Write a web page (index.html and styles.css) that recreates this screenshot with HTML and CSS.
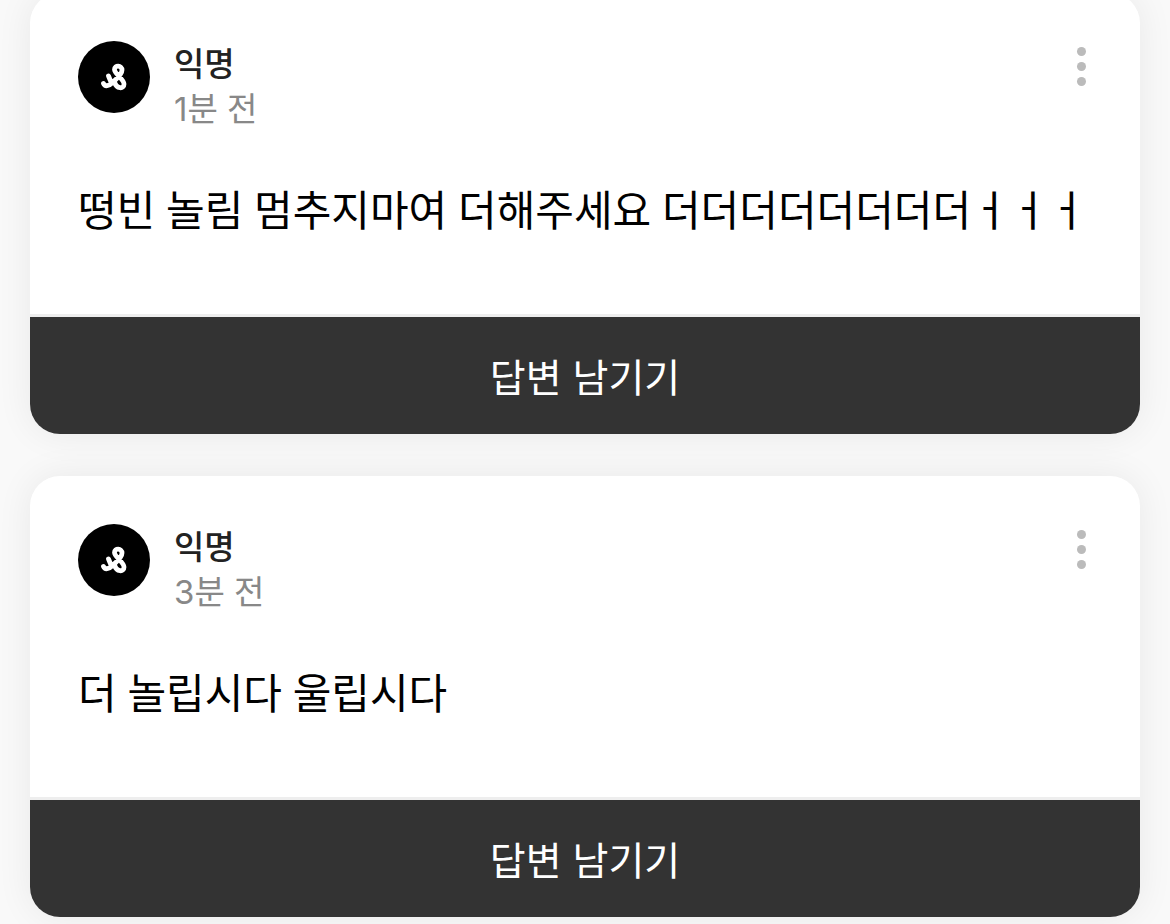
FILE: index.html
```html
<!DOCTYPE html>
<html lang="ko">
<head>
<meta charset="utf-8">
<meta name="viewport" content="width=device-width, initial-scale=1">
<title>익명 질문</title>
<link rel="stylesheet" href="styles.css">
</head>
<body>
<svg class="symbols" aria-hidden="true">
  <symbol id="ampersand" viewBox="0 0 72 72">
    <path d="M30.500 35 L33 41 M25.500 42.500 C27 46 31 45 34 42 C38 38 44 34 44 29 C44 24 36.500 24 36.500 28.500 C36.500 33 46 38 46 43 C46 48.500 38.500 48 36.500 41" fill="none" stroke="#fff" stroke-width="4.800" stroke-linecap="round" stroke-linejoin="round"/>
  </symbol>
</svg>
<main class="feed">
  <article class="card">
    <div class="content">
      <header class="header">
        <svg class="avatar" aria-hidden="true"><use href="#ampersand"/></svg>
        <div class="author">
          <span class="name">익명</span>
          <time class="time">1분 전</time>
        </div>
        <button class="more" type="button" aria-label="더보기"><span class="dot"></span><span class="dot"></span><span class="dot"></span></button>
      </header>
      <p class="message">떵빈 놀림 멈추지마여 더해주세요 더더더더더더더더ㅓㅓㅓ</p>
    </div>
    <button class="reply" type="button">답변 남기기</button>
  </article>
  <article class="card">
    <div class="content">
      <header class="header">
        <svg class="avatar" aria-hidden="true"><use href="#ampersand"/></svg>
        <div class="author">
          <span class="name">익명</span>
          <time class="time">3분 전</time>
        </div>
        <button class="more" type="button" aria-label="더보기"><span class="dot"></span><span class="dot"></span><span class="dot"></span></button>
      </header>
      <p class="message">더 놀립시다 울립시다</p>
    </div>
    <button class="reply" type="button">답변 남기기</button>
  </article>
</main>
</body>
</html>
```
FILE: styles.css
```css
* { box-sizing: border-box; }
body {
  margin: 0;
  background: #f9f9f9;
  color: #000;
  font-family: Inter, "Noto Sans CJK KR", sans-serif;
}
button {
  border: 0;
  font: inherit;
  cursor: pointer;
}
.symbols { display: none; }
.feed {
  display: flex;
  flex-direction: column;
  gap: 42px;
  margin-top: -7px;
  padding: 0 30px 7px;
}
.card {
  overflow: hidden;
  border-radius: 30px;
  background: #fff;
  box-shadow: 0 0 36px rgba(0, 0, 0, 0.07);
}
.content {
  padding: 48px 48px 74px;
  border-bottom: 3px solid #eee;
}
.header {
  display: flex;
  align-items: flex-start;
  gap: 24px;
}
.avatar {
  flex: none;
  width: 72px;
  height: 72px;
  border-radius: 50%;
  background: #000;
}
.author {
  display: flex;
  flex: 1;
  flex-direction: column;
  padding-top: 1px;
  font-size: 33px;
  line-height: 45px;
}
.name {
  color: #222;
  font-weight: 500;
}
.time {
  color: #888;
}
.more {
  display: flex;
  flex-direction: column;
  gap: 6px;
  padding: 6px;
  background: none;
}
.dot {
  width: 9px;
  height: 9px;
  border-radius: 50%;
  background: #bbb;
}
.message {
  margin: 48px 0 0;
  font-family: Lato, "Noto Sans CJK KR", sans-serif;
  font-size: 42px;
  line-height: 60px;
}
.reply {
  display: block;
  width: 100%;
  padding: 28px 48px 29px;
  background: #333;
  color: #fff;
  font-family: "Noto Sans CJK KR", sans-serif;
  font-size: 39px;
  line-height: 60px;
}
```
